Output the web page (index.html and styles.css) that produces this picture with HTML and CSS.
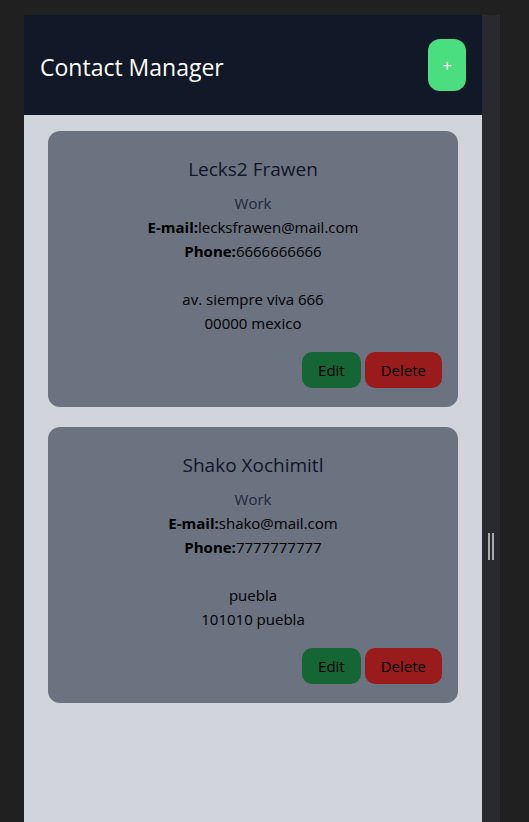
FILE: index.html
```html
<!DOCTYPE html>
<html lang="en">
<head>
<meta charset="utf-8">
<title>Contact Manager</title>
<link rel="stylesheet" href="styles.css">
</head>
<body>
<div class="app">
  <header class="header">
    <h1 class="title">Contact Manager</h1>
    <button class="add-btn">+</button>
  </header>
  <main class="list">
    <div class="card">
      <h2 class="name">Lecks2 Frawen</h2>
      <p class="type">Work</p>
      <p class="line"><b>E-mail:</b>lecksfrawen@mail.com</p>
      <p class="line"><b>Phone:</b>6666666666</p>
      <p class="line blank">&nbsp;</p>
      <p class="line">av. siempre viva 666</p>
      <p class="line">00000 mexico</p>
      <div class="actions">
        <button class="btn edit">Edit</button>
        <button class="btn delete">Delete</button>
      </div>
    </div>
    <div class="card">
      <h2 class="name">Shako Xochimitl</h2>
      <p class="type">Work</p>
      <p class="line"><b>E-mail:</b>shako@mail.com</p>
      <p class="line"><b>Phone:</b>7777777777</p>
      <p class="line blank">&nbsp;</p>
      <p class="line">puebla</p>
      <p class="line">101010 puebla</p>
      <div class="actions">
        <button class="btn edit">Edit</button>
        <button class="btn delete">Delete</button>
      </div>
    </div>
  </main>
</div>
<div class="handle"><div class="grip"></div></div>
</body>
</html>
```
FILE: styles.css
```css
* { box-sizing: border-box; }
html, body { height: 100%; }
body {
  margin: 0;
  background: #202020;
  display: flex;
  padding: 15px 0 0 24px;
  font-family: "Open Sans", "Noto Sans", sans-serif;
  overflow: hidden;
}
.app {
  width: 458px;
  min-height: 807px;
  background: #d1d5db;
  display: flex;
  flex-direction: column;
}
.header {
  height: 100px;
  background: #111827;
  display: flex;
  align-items: center;
  justify-content: space-between;
  padding: 0 16px;
}
.title {
  margin: 4px 0 0;
  color: #fff;
  font-size: 23px;
  font-weight: 400;
}
.add-btn {
  width: 38px;
  height: 52px;
  border: none;
  border-radius: 12px;
  background: #4ade80;
  color: #fff;
  font-size: 17px;
  font-family: inherit;
  padding: 0;
}
.list {
  padding: 16px 24px;
  display: flex;
  flex-direction: column;
  gap: 20px;
}
.card {
  background: #6b7280;
  border-radius: 12px;
  padding: 24px 16px 19px;
  text-align: center;
}
.name {
  margin: 0 0 8px;
  font-size: 19px;
  line-height: 28px;
  font-weight: 400;
  color: #0f172a;
}
.type {
  margin: 0;
  font-size: 15px;
  line-height: 24px;
  color: #1e293b;
}
.line {
  margin: 0;
  font-size: 15px;
  line-height: 24px;
  color: #000;
}
.line b { font-weight: 700; }
.actions {
  margin-top: 17px;
  display: flex;
  justify-content: flex-end;
  gap: 4px;
}
.btn {
  height: 36px;
  border: none;
  border-radius: 10px;
  padding: 0 16px;
  font-family: inherit;
  font-size: 15px;
  color: #000;
}
.edit { background: #166534; }
.delete { background: #991b1b; }
.handle {
  width: 18px;
  background: #292a2d;
  display: flex;
  justify-content: center;
  padding-top: 518px;
}
.grip {
  width: 6px;
  height: 27px;
  border-left: 2px solid #a9aaab;
  border-right: 2px solid #a9aaab;
}
```
